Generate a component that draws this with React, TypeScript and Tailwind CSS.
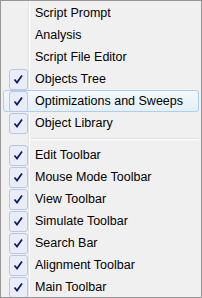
import React from 'react';

type Item = { label: string; checked?: boolean; hover?: boolean } | 'sep';

const ITEMS: Item[] = [
  { label: 'Script Prompt' },
  { label: 'Analysis' },
  { label: 'Script File Editor' },
  { label: 'Objects Tree', checked: true },
  { label: 'Optimizations and Sweeps', checked: true, hover: true },
  { label: 'Object Library', checked: true },
  'sep',
  { label: 'Edit Toolbar', checked: true },
  { label: 'Mouse Mode Toolbar', checked: true },
  { label: 'View Toolbar', checked: true },
  { label: 'Simulate Toolbar', checked: true },
  { label: 'Search Bar', checked: true },
  { label: 'Alignment Toolbar', checked: true },
  { label: 'Main Toolbar', checked: true },
];

function Check() {
  return (
    <div className="flex h-[21px] w-[19px] items-center justify-center rounded-[3px] border border-[#bcc6e2] bg-[#e9edf8]">
      <svg width="11" height="11" viewBox="0 0 11 11">
        <path d="M1.5 5.5 L4 8.5 L9 1.5" fill="none" stroke="#0b1670" strokeWidth="1.7" />
      </svg>
    </div>
  );
}

export default function App() {
  return (
    <div
      className="relative h-[298px] w-[202px] overflow-hidden border border-[#979797] bg-[#f0f0f0] p-[1px_2px] text-[12.5px] text-black"
      style={{ fontFamily: '"Liberation Sans", Arial, sans-serif' }}
    >
      {/* gutter line */}
      <div className="absolute top-0 bottom-0 left-[27px] w-[2px] border-l border-[#e2e3e3] bg-white" />
      {ITEMS.map((item, i) => {
        if (item === 'sep') {
          return (
            <div key={i} className="flex h-[10px] items-center pl-[27px]">
              <div className="h-[2px] w-full border-t border-[#e0e0e0] bg-white" />
            </div>
          );
        }
        return (
          <div
            key={i}
            className={`relative flex h-[22px] items-center rounded-[3px] border ${
              item.hover
                ? 'border-[#a9d1ec] bg-gradient-to-b from-[#f3f8fd] to-[#e4eff9]'
                : 'border-transparent'
            }`}
          >
            <div className="flex w-[28px] justify-center pl-[1px]">
              {item.checked && <Check />}
            </div>
            <span className="pl-[3px] leading-none">{item.label}</span>
          </div>
        );
      })}
    </div>
  );
}
